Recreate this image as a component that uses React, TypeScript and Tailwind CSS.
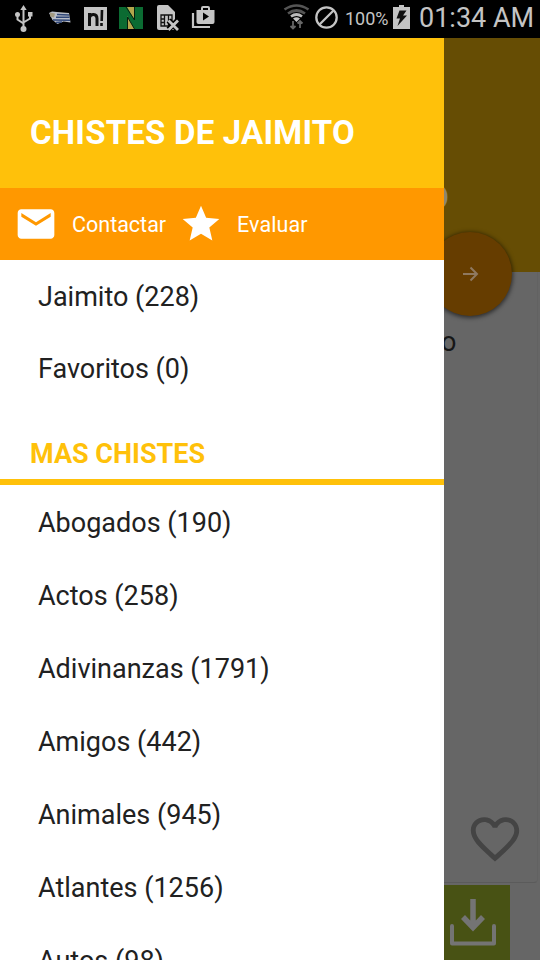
interface Item {
    nombre: string;
    total: number;
}

const principales: Item[] = [
    { nombre: "Jaimito", total: 228 },
    { nombre: "Favoritos", total: 0 },
];

const categorias: Item[] = [
    { nombre: "Abogados", total: 190 },
    { nombre: "Actos", total: 258 },
    { nombre: "Adivinanzas", total: 1791 },
    { nombre: "Amigos", total: 442 },
    { nombre: "Animales", total: 945 },
    { nombre: "Atlantes", total: 1256 },
    { nombre: "Autos", total: 98 },
];

const StatusBar: React.FC = () => (
    <header className="flex h-[38px] shrink-0 items-center bg-black text-[#c4c4c4]">
        <svg width="228" height="38" viewBox="0 0 228 38" className="shrink-0">
            {/* usb */}
            <g fill="none" stroke="#c4c4c4" strokeWidth="2">
                <path d="M23.5 9v18M17.500 15v4.5l6 4M30 14v4.5l-6.5 4" />
            </g>
            <path d="M23.500 5l3.200 5h-6.400zM28 12h4.500v4.500h-4.500z" fill="#c4c4c4" />
            <circle cx="17.500" cy="14.500" r="2.500" fill="#c4c4c4" />
            <circle cx="23.500" cy="29" r="3" fill="#c4c4c4" />
            {/* flag */}
            <path d="M49 13l3-1.500 5 .5 12 1 1.500 9.500-7-1-6 2.500-5-4z" fill="#b9bdc6" />
            <path d="M57 14.500l12 .5M56 17.300h13.500M53 20l17 .3M56 22.500l6-.5" stroke="#2f4677" strokeWidth="1.400" />
            <path d="M50 12.500l5 1-1 4-4-1z" fill="#a39a80" />
            {/* n! */}
            <rect x="84" y="7" width="23" height="23" fill="#c4c4c4" />
            <path d="M89.500 26V13M89.500 17.500c1-4 7.500-4.500 7.500 1V26" fill="none" stroke="#111" strokeWidth="3" />
            <path d="M102 10l-.3 11M101.500 23v3" stroke="#111" strokeWidth="2.600" />
            {/* N */}
            <rect x="119" y="7" width="24" height="22" fill="#0b6b32" />
            <path d="M127 7h7v12zM127 16l7.500 13H127z" fill="#b3a64c" />
            <path d="M126 7l8.500 13V7M127.500 29V17l7 12" fill="none" stroke="#05210f" strokeWidth="1" />
            {/* sim */}
            <path d="M157 7q0-2 2-2h9l7 7v17q0 1-1 1h-15q-2 0-2-2z" fill="#c4c4c4" />
            <path d="M161 15h11v11h-11zM164.500 15v11M168.500 15v11M161 19h3.500M161 22.500h3.500M168.500 20h4" fill="none" stroke="#111" strokeWidth="1.300" />
            <path d="M168.500 20.500l9 9M177.500 20.500l-9 9" stroke="#000" strokeWidth="5.500" />
            <path d="M168.500 20.500l9.500 9.500M178 20.500l-9.500 9.500" stroke="#c4c4c4" strokeWidth="2.800" />
            {/* play store */}
            <path d="M193 13v14h17" fill="none" stroke="#c4c4c4" strokeWidth="2.200" />
            <path d="M202 10V8q0-1 1-1h5q1 0 1 1v2" fill="none" stroke="#c4c4c4" strokeWidth="2" />
            <path d="M196.500 10h18v12q0 2-2 2h-14q-2 0-2-2z" fill="#c4c4c4" />
            <path d="M203 12.500l6 4-6 4z" fill="#000" />
        </svg>
        <svg width="68" height="38" viewBox="0 0 68 38" className="ml-[51px] shrink-0">
            {/* wifi */}
            <g fill="none" strokeWidth="2.700">
                <path d="M5.500 9.500q12-8 24 0M9 13.500q8.500-6 17 0" stroke="#555" />
                <path d="M12 16.500q5.500-4 11 0" stroke="#bbb" />
            </g>
            <path d="M14 18.500q3.500-2.500 7 0l-3.500 3.500z" fill="#c4c4c4" />
            <path d="M14 21v8M11.500 26l2.500 2.500 2.500-2.500M21 28v-7M18.500 23.500l2.500-2.500 2.500 2.500" fill="none" stroke="#666" strokeWidth="1.800" />
            {/* silent */}
            <circle cx="47.500" cy="17.500" r="10.200" fill="none" stroke="#c4c4c4" strokeWidth="2.300" />
            <path d="M40.500 24.500l14-14" stroke="#c4c4c4" strokeWidth="2.300" />
        </svg>
        <span className="-ml-[2px] w-[48px] shrink-0 whitespace-nowrap text-[18px] leading-[38px]">100%</span>
        <svg width="17" height="24" viewBox="0 0 17 24" className="mb-[4px] shrink-0">
            <path d="M6 0h5v2h6v22H0V2h6z" fill="#c4c4c4" />
            <path d="M6.500 5.500h7l-3.500 5h4l-9.500 10.500 2.500-7.500H3.500z" fill="#111" />
        </svg>
        <span className="mb-[2px] ml-[9px] whitespace-nowrap text-[27px] leading-[36px]">01:34 AM</span>
    </header>
);

const Fila: React.FC<{ item: Item }> = ({ item }) => (
    <li className="flex h-[73px] items-center pl-[38px] text-[27px] text-[#212121]">
        {item.nombre} ({item.total})
    </li>
);

const Drawer: React.FC = () => (
    <nav className="flex w-[444px] shrink-0 flex-col bg-white">
        <div className="flex h-[150px] shrink-0 items-end bg-[#ffc10a] pb-[35px] pl-[30px]">
            <h1 className="whitespace-nowrap text-[33px] leading-[40px] font-bold tracking-[0.2px] text-white">CHISTES DE JAIMITO</h1>
        </div>
        <div className="flex h-[72px] shrink-0 items-center bg-[#ff9800] pl-[14px] text-[21.5px] text-white">
            <button className="flex items-center">
                <svg width="44" height="44" viewBox="0 0 24 24" fill="currentColor">
                    <path d="M20 4H4c-1.100 0-1.990.9-1.990 2L2 18c0 1.100.9 2 2 2h16c1.100 0 2-.9 2-2V6c0-1.100-.9-2-2-2zm0 4l-8 5-8-5V6l8 5 8-5v2z" />
                </svg>
                <span className="ml-[14px] w-[107px] pt-[2px] text-left">Contactar</span>
            </button>
            <button className="flex items-center">
                <svg width="44" height="44" viewBox="0 0 24 24" fill="currentColor">
                    <path d="M12 17.270L18.180 21l-1.640-7.030L22 9.240l-7.190-.61L12 2 9.190 8.630 2 9.240l5.460 4.730L5.820 21z" />
                </svg>
                <span className="ml-[14px] pt-[2px] tracking-[0.1px]">Evaluar</span>
            </button>
        </div>
        <ul className="flex h-[146px] shrink-0 flex-col pt-[1px] pb-[1px]">
            {principales.map((item) => <Fila key={item.nombre} item={item} />)}
        </ul>
        <h2 className="flex h-[79px] shrink-0 items-center border-b-[6px] border-[#ffc10a] pt-[24px] pl-[30px] text-[27px] font-bold text-[#ffc10a]">
            MAS CHISTES
        </h2>
        <ul className="pt-[2px]">
            {categorias.map((item) => <Fila key={item.nombre} item={item} />)}
        </ul>
    </nav>
);

/* Franja visible de la pantalla, oscurecida bajo el menu */
const Fondo: React.FC = () => (
    <main className="relative flex w-[96px] shrink-0 flex-col overflow-hidden bg-[#666666]">
        <div className="flex h-[234px] shrink-0 bg-[#664d04] pt-[140px]">
            <span className="-ml-[18px] text-[33px] leading-[40px] font-bold text-[#8d8670]">O</span>
        </div>
        <div className="mr-[2px] flex h-[611px] shrink-0 flex-col justify-between rounded-br-sm border-r border-b border-r-[#626262] border-b-[#5b5b5b] pt-[52px] pb-[14px]">
            <span className="-ml-[3px] text-[27px] leading-[36px] text-[#161616]">o</span>
            <svg width="58" height="58" viewBox="0 0 24 24" fill="#444444" className="ml-[22px]">
                <path d="M16.500 3c-1.740 0-3.410.81-4.500 2.090C10.910 3.810 9.240 3 7.500 3 4.420 3 2 5.420 2 8.500c0 3.780 3.400 6.860 8.550 11.540L12 21.350l1.450-1.320C18.600 15.360 22 12.280 22 8.500 22 5.420 19.580 3 16.500 3zm-4.400 15.550l-.1.100-.1-.1C7.140 14.240 4 11.390 4 8.500 4 6.500 5.500 5 7.500 5c1.540 0 3.040.99 3.570 2.360h1.870C13.460 5.990 14.960 5 16.500 5c2 0 3.500 1.500 3.500 3.500 0 2.890-3.140 5.740-7.900 10.050z" />
            </svg>
        </div>
        <div className="mt-[2px] h-[75px] w-[66px] shrink-0 bg-[#485214]">
            <svg width="66" height="75" viewBox="0 0 66 75" fill="none" stroke="#747474">
                <path d="M8 41v17.500h42V41" strokeWidth="4" strokeLinecap="round" strokeLinejoin="round" />
                <path d="M29 14v28M19 32l10 10.500L39 32" strokeWidth="5.500" />
            </svg>
        </div>
        <button className="absolute top-[194px] -left-[16px] flex size-[84px] items-center justify-center rounded-full bg-[#663d00] shadow-[0_1px_4px_1px_rgba(0,0,0,0.55)]">
            <svg width="20" height="20" viewBox="0 0 20 20" fill="none" stroke="#8f7960" strokeWidth="2">
                <path d="M3 10h14M10.500 3.500L17 10l-6.500 6.500" />
            </svg>
        </button>
    </main>
);

const App: React.FC = () => (
    <div className="flex h-[960px] w-[540px] flex-col overflow-hidden bg-black font-[Roboto,sans-serif]">
        <StatusBar />
        <div className="flex h-[922px] overflow-hidden">
            <Drawer />
            <Fondo />
        </div>
    </div>
);

export default App;
